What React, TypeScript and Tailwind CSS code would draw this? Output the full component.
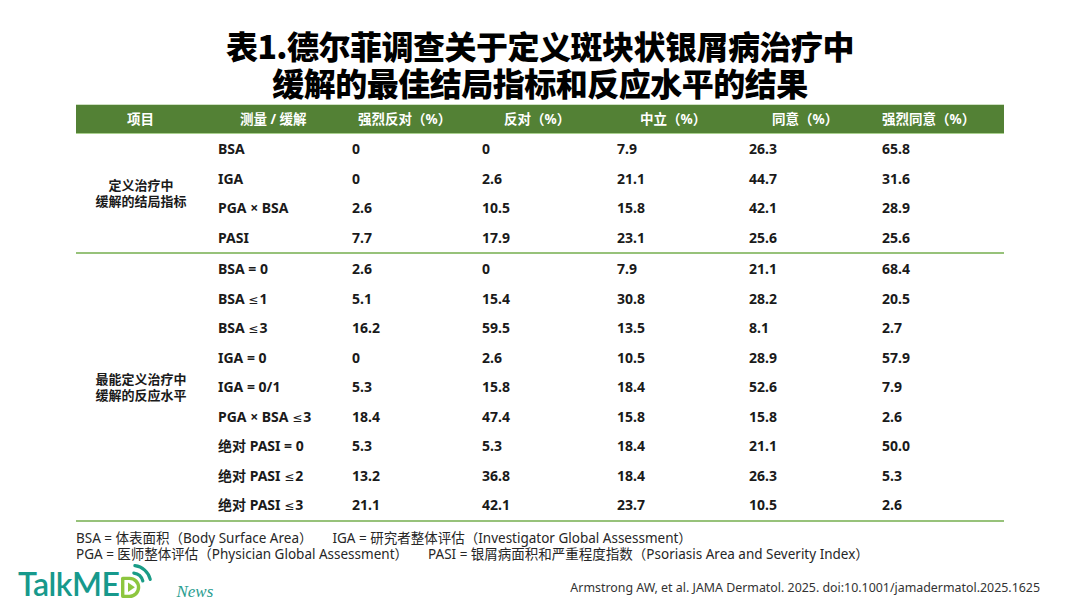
const COLS = 'grid grid-cols-[142px_134px_130px_135px_132px_133px_122px]';

const HEADERS = [
  { label: '项目', cls: 'pl-[51px]' },
  { label: '测量 / 缓解', cls: 'pl-[22px]' },
  { label: '强烈反对（%）', cls: 'pl-[6px]' },
  { label: '反对（%）', cls: 'pl-[22px]' },
  { label: '中立（%）', cls: 'pl-[23px]' },
  { label: '同意（%）', cls: 'pl-[23px]' },
  { label: '强烈同意（%）', cls: 'pl-0' },
];

const GROUPS = [
  {
    label: ['定义治疗中', '缓解的结局指标'],
    rows: [
      ['BSA', '0', '0', '7.9', '26.3', '65.8'],
      ['IGA', '0', '2.6', '21.1', '44.7', '31.6'],
      ['PGA × BSA', '2.6', '10.5', '15.8', '42.1', '28.9'],
      ['PASI', '7.7', '17.9', '23.1', '25.6', '25.6'],
    ],
  },
  {
    label: ['最能定义治疗中', '缓解的反应水平'],
    rows: [
      ['BSA = 0', '2.6', '0', '7.9', '21.1', '68.4'],
      ['BSA ≤1', '5.1', '15.4', '30.8', '28.2', '20.5'],
      ['BSA ≤3', '16.2', '59.5', '13.5', '8.1', '2.7'],
      ['IGA = 0', '0', '2.6', '10.5', '28.9', '57.9'],
      ['IGA = 0/1', '5.3', '15.8', '18.4', '52.6', '7.9'],
      ['PGA × BSA ≤3', '18.4', '47.4', '15.8', '15.8', '2.6'],
      ['绝对 PASI = 0', '5.3', '5.3', '18.4', '21.1', '50.0'],
      ['绝对 PASI ≤2', '13.2', '36.8', '18.4', '26.3', '5.3'],
      ['绝对 PASI ≤3', '21.1', '42.1', '23.7', '10.5', '2.6'],
    ],
  },
];

// the CJK font draws ≤ slanted; keep it upright like the slide
const Cell = ({ text }: { text: string }) => {
  if (!text.includes('≤')) return <span>{text}</span>;
  const [a, b] = text.split('≤');
  return (
    <span>
      {a}
      <span className="font-['DejaVu_Sans',sans-serif] font-normal text-[12px] mr-[1px]">≤</span>
      {b}
    </span>
  );
};

const TalkMedLogo = () => (
  <div className="flex items-end">
    <span className="text-[32px] leading-none font-semibold tracking-[-0.5px] text-[#17998c] font-['Lato','Open_Sans',sans-serif]">
      TalkME
    </span>
    <svg width="34" height="36" viewBox="0 0 32 34" className="ml-[1px] mb-[1px]">
      {/* D with play button */}
      <path d="M2.5 14.5 H9 A8.5 8.5 0 0 1 9 31.5 H2.5 Z" fill="none" stroke="#8dc63f" strokeWidth="3.2" strokeLinejoin="round" />
      <path d="M7.5 18.5 L14 23 L7.5 27.5 Z" fill="#8dc63f" />
      {/* signal arcs */}
      <path d="M13 9.5 A10 10 0 0 1 21.5 17" fill="none" stroke="#1a9c86" strokeWidth="3" strokeLinecap="round" />
      <path d="M14 2.5 A17 17 0 0 1 28.5 15.5" fill="none" stroke="#1a9c86" strokeWidth="3" strokeLinecap="round" />
    </svg>
    <span className="ml-[22px] mb-[-4px] text-[17px] italic text-[#2a9d8f] font-['Liberation_Serif',serif]">News</span>
  </div>
);

export default function App() {
  return (
    <div className="w-[1080px] h-[608px] bg-white flex flex-col font-['Noto_Sans','Noto_Sans_CJK_SC',sans-serif] text-[#1a1a1a]">
      {/* Title */}
      <div className="pt-[27px] text-center text-[32px] leading-[37px] font-black tracking-[-0.5px] text-black font-['Noto_Sans_CJK_SC',sans-serif]">
        <div>表1.德尔菲调查关于定义斑块状银屑病治疗中</div>
        <div>缓解的最佳结局指标和反应水平的结果</div>
      </div>

      {/* Table */}
      <div className="mx-[76px] mt-[3px] border-t border-[#cfe0c3]">
        <div className={`${COLS} h-[29px] items-center bg-[#538135] text-white text-[13.5px] font-bold border-b border-[#a9d08e]`}>
          {HEADERS.map(h => (
            <div key={h.label} className={h.cls}>{h.label}</div>
          ))}
        </div>

        {GROUPS.map(group => (
          <div key={group.label[0]} className={`${COLS} border-b-2 border-[#97c27a]`}>
            <div
              className="flex flex-col items-center justify-center text-[13px] leading-[16px] font-bold pr-[12px]"
              style={{ gridRow: `span ${group.rows.length}` }}
            >
              <span>{group.label[0]}</span>
              <span>{group.label[1]}</span>
            </div>
            {group.rows.map(row =>
              row.map((cell, i) => (
                <div key={row[0] + i} className="h-[29.5px] flex items-center text-[14px] font-bold">
                  <Cell text={cell} />
                </div>
              ))
            )}
          </div>
        ))}
      </div>

      {/* Footnotes */}
      <div className="mx-[76px] mt-[8px] text-[13.5px] leading-[16px] text-[#262626]">
        <div>
          BSA = 体表面积（Body Surface Area）
          <span className="ml-[20px]">IGA = 研究者整体评估（Investigator Global Assessment）</span>
        </div>
        <div>
          PGA = 医师整体评估（Physician Global Assessment）
          <span className="ml-[20px]">PASI = 银屑病面积和严重程度指数（Psoriasis Area and Severity Index）</span>
        </div>
      </div>

      {/* Bottom bar */}
      <div className="mt-auto mb-[8px] flex items-end justify-between pl-[18px] pr-[40px]">
        <TalkMedLogo />
        <div className="mb-[2px] text-[12.4px] text-[#333]">
          Armstrong AW, et al. JAMA Dermatol. 2025. doi:10.1001/jamadermatol.2025.1625
        </div>
      </div>
    </div>
  );
}
